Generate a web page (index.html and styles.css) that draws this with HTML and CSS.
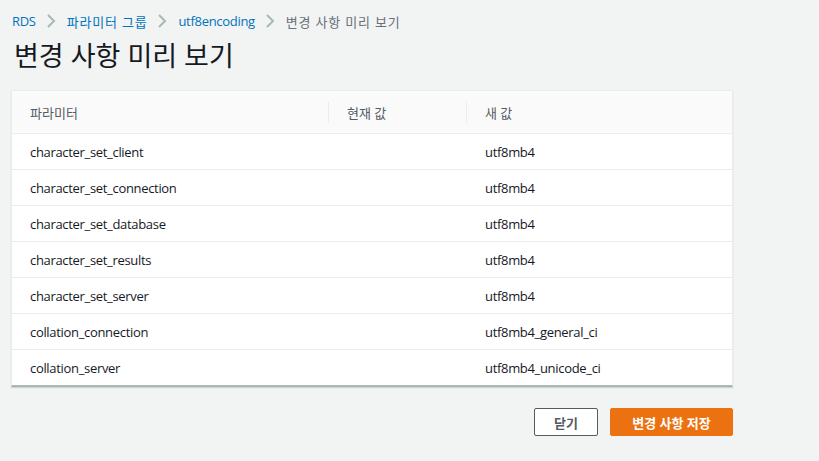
FILE: index.html
```html
<!DOCTYPE html>
<html lang="ko">
<head>
<meta charset="utf-8">
<link rel="stylesheet" href="styles.css">
</head>
<body>
<div class="page">
  <nav class="crumbs">
    <a class="crumb link lat">RDS</a>
    <svg class="chev" viewBox="0 0 10 16" width="10" height="16"><path d="M2 2 L8 8 L2 14" fill="none" stroke="#aab7b8" stroke-width="2"/></svg>
    <a class="crumb link ko">파라미터 그룹</a>
    <svg class="chev" viewBox="0 0 10 16" width="10" height="16"><path d="M2 2 L8 8 L2 14" fill="none" stroke="#aab7b8" stroke-width="2"/></svg>
    <a class="crumb link lat">utf8encoding</a>
    <svg class="chev" viewBox="0 0 10 16" width="10" height="16"><path d="M2 2 L8 8 L2 14" fill="none" stroke="#aab7b8" stroke-width="2"/></svg>
    <span class="crumb current ko">변경 사항 미리 보기</span>
  </nav>
  <h1 class="title">변경 사항 미리 보기</h1>
  <div class="card">
    <div class="row head">
      <div class="c1">파라미터</div>
      <div class="c2"><span class="sep"></span>현재 값</div>
      <div class="c3"><span class="sep"></span>새 값</div>
    </div>
    <div class="row"><div class="c1">character_set_client</div><div class="c2"></div><div class="c3">utf8mb4</div></div>
    <div class="row"><div class="c1">character_set_connection</div><div class="c2"></div><div class="c3">utf8mb4</div></div>
    <div class="row"><div class="c1">character_set_database</div><div class="c2"></div><div class="c3">utf8mb4</div></div>
    <div class="row"><div class="c1">character_set_results</div><div class="c2"></div><div class="c3">utf8mb4</div></div>
    <div class="row"><div class="c1">character_set_server</div><div class="c2"></div><div class="c3">utf8mb4</div></div>
    <div class="row"><div class="c1">collation_connection</div><div class="c2"></div><div class="c3">utf8mb4_general_ci</div></div>
    <div class="row last"><div class="c1">collation_server</div><div class="c2"></div><div class="c3">utf8mb4_unicode_ci</div></div>
  </div>
  <div class="actions">
    <button class="btn normal">닫기</button>
    <button class="btn primary">변경 사항 저장</button>
  </div>
</div>
</body>
</html>
```
FILE: styles.css
```css
html, body {
  margin: 0;
  padding: 0;
  background: #f2f3f3;
  font-family: "Open Sans", "Noto Sans CJK KR", sans-serif;
  color: #16191f;
}
.page {
  width: 722px;
  padding: 9px 0 0 11px;
}
.crumbs {
  display: flex;
  align-items: center;
  height: 24px;
  font-size: 13px;
  padding-left: 1px;
}
.crumb.link { color: #0073bb; }
.crumb.current { color: #687078; }
.crumb.lat { letter-spacing: -0.3px; }
.crumb.ko { letter-spacing: 0.8px; }
.chev { margin: 0 11px 0 10px; }
.title {
  margin: 5px 0 0 3px;
  font-size: 27px;
  font-weight: 400;
  line-height: 36px;
  color: #16191f;
}
.card {
  margin-top: 16px;
  background: #fff;
  border: 1px solid #eaeded;
  border-bottom: 2px solid #aab7b8;
  box-shadow: 0 1px 1px rgba(0,28,36,0.15);
  font-size: 13px;
}
.row {
  display: flex;
  height: 36px;
  align-items: center;
  border-bottom: 1px solid #eaeded;
  box-sizing: border-box;
}
.row:not(.head) { letter-spacing: -0.32px; }
.row.last { border-bottom: none; height: 35px; }
.row.head {
  height: 43px;
  background: #fafafa;
  color: #545b64;
}
.c1 { width: 316px; padding-left: 18px; box-sizing: border-box; }
.c2 { width: 138px; display: flex; align-items: center; box-sizing: border-box; }
.c3 { flex: 1; display: flex; align-items: center; box-sizing: border-box; }
.row:not(.head) .c3 { padding-left: 19px; }
.sep {
  width: 1px;
  height: 21px;
  background: #eaeded;
  margin-right: 18px;
}
.actions {
  display: flex;
  justify-content: flex-end;
  gap: 12px;
  margin-top: 21px;
}
.btn {
  height: 28px;
  font-family: "Open Sans", "Noto Sans CJK KR", sans-serif;
  font-size: 13px;
  font-weight: 700;
  border-radius: 2px;
  padding: 0;
  cursor: pointer;
  display: flex;
  align-items: center;
  justify-content: center;
}
.btn.normal {
  width: 64px;
  background: #fff;
  border: 1px solid #545b64;
  color: #545b64;
}
.btn.primary {
  width: 123px;
  background: #ec7211;
  border: 1px solid #ec7211;
  color: #fff;
}
```
